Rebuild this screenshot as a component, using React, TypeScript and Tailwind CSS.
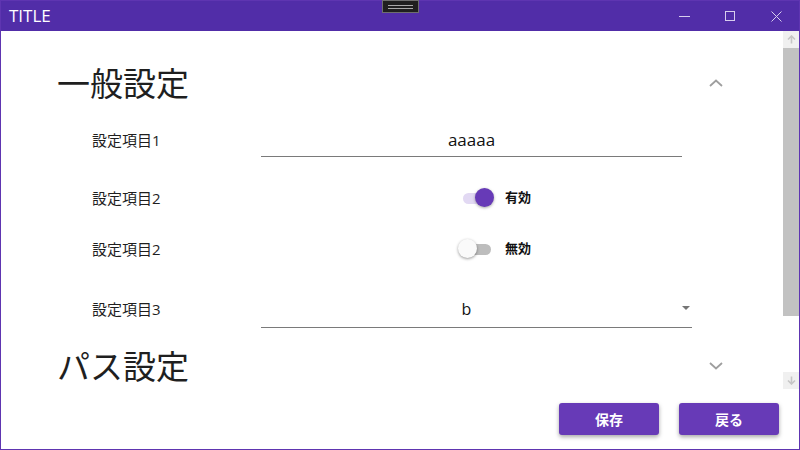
const font = "font-['Open_Sans','Noto_Sans_CJK_JP',sans-serif]"

function Chevron({ up }: { up?: boolean }) {
	return (
		<svg width="14" height="8" viewBox="0 0 14 8" className="text-[#9e9e9e]">
			<path
				d={up ? "M1 7 L7 1.5 L13 7" : "M1 1 L7 6.5 L13 1"}
				fill="none"
				stroke="currentColor"
				strokeWidth="1.8"
			/>
		</svg>
	)
}

function Toggle({ on, label }: { on: boolean; label: string }) {
	return (
		<div className="flex items-center gap-[11px] pl-[197px]">
			<div className="relative h-[20px] w-[36px]">
				<div
					className={
						on
							? "absolute left-[5px] top-[5px] h-[11px] w-[28px] rounded-full bg-[#e2d9f3]"
							: "absolute left-[5px] top-[5px] h-[11px] w-[28px] rounded-full bg-[#bdbdbd]"
					}
				/>
				<div
					className={
						on
							? "absolute left-[17px] top-0 h-[19px] w-[19px] rounded-full bg-[#673ab7] shadow-[0_1px_3px_rgba(0,0,0,0.35)]"
							: "absolute left-0 top-0 h-[19px] w-[19px] rounded-full bg-[#fafafa] shadow-[0_1px_3px_rgba(0,0,0,0.4)]"
					}
				/>
			</div>
			<span className="text-[13px] font-bold text-[#111]">{label}</span>
		</div>
	)
}

function ScrollArrow({ up }: { up?: boolean }) {
	return (
		<div className="flex h-[17px] items-center justify-center bg-[#f0f0f0]">
			<svg width="9" height="9" viewBox="0 0 9 9" className={up ? "text-[#c6c6c6]" : "text-[#c6c6c6] rotate-180"}>
				<path d="M4.5 1 V8.5 M1 4.5 L4.5 1 L8 4.5" fill="none" stroke="currentColor" strokeWidth="1.6" />
			</svg>
		</div>
	)
}

export default function App() {
	return (
		<div className={`${font} relative flex h-[450px] w-[800px] flex-col border border-[#5e35b1] bg-white`}>
			{/* title bar */}
			<div className="flex h-[30px] shrink-0 items-center bg-[#512da8]">
				<span className="pl-[8px] text-[17px] text-white">TITLE</span>
				<div className="ml-auto flex h-full">
					<div className="flex w-[46px] items-center justify-center">
						<div className="h-px w-[11px] bg-[#d7cdee]" />
					</div>
					<div className="flex w-[46px] items-center justify-center">
						<div className="h-[10px] w-[10px] border border-[#d7cdee]" />
					</div>
					<div className="flex w-[46px] items-center justify-center">
						<svg width="11" height="11" viewBox="0 0 11 11">
							<path d="M0.5 0.5 L10.5 10.5 M10.5 0.5 L0.5 10.5" stroke="#d7cdee" strokeWidth="1" />
						</svg>
					</div>
				</div>
			</div>
			<div className="absolute left-[381px] top-[-1px] flex h-[13px] w-[37px] flex-col items-center justify-center gap-[2px] border border-[#6e6e6e] bg-[#1f1f1f]">
				<div className="h-px w-[25px] bg-[#a8a8a8]" />
				<div className="h-px w-[25px] bg-[#a8a8a8]" />
			</div>

			{/* body */}
			<div className="flex h-[358px] shrink-0">
				<div className="flex-1 overflow-hidden pl-[56px] pr-[60px] text-[#1f1f1f]">
					<div className="mt-[30px] flex h-[44px] items-center justify-between">
						<h2 className="text-[33px] leading-none">一般設定</h2>
						<Chevron up />
					</div>

					<div className="mt-[15px] flex h-[40px] items-center pl-[35px]">
						<span className="w-[169px] text-[15px]">設定項目1</span>
						<div className="flex h-[34px] w-[421px] items-center justify-center border-b border-[#7a7a7a] text-[17px] text-[#111]">
							aaaaa
						</div>
					</div>

					<div className="mt-[18px] flex h-[40px] items-center pl-[35px]">
						<span className="w-[169px] text-[15px]">設定項目2</span>
						<Toggle on label="有効" />
					</div>

					<div className="mt-[11px] flex h-[40px] items-center pl-[35px]">
						<span className="w-[169px] text-[15px]">設定項目2</span>
						<Toggle on={false} label="無効" />
					</div>

					<div className="mt-[20px] flex h-[40px] items-center pl-[35px]">
						<span className="w-[169px] text-[15px]">設定項目3</span>
						<div className="relative flex h-[38px] w-[431px] items-center justify-center border-b border-[#7a7a7a] pr-[20px] text-[16px] text-[#111]">
							b
							<svg width="8" height="4" viewBox="0 0 8 4" className="absolute right-[2px] top-[16px]">
								<path d="M0 0 H8 L4 4 Z" fill="#757575" />
							</svg>
						</div>
					</div>

					<div className="mt-[15px] flex h-[44px] items-center justify-between">
						<h2 className="text-[33px] leading-none">パス設定</h2>
						<Chevron />
					</div>
				</div>

				{/* scrollbar */}
				<div className="flex w-[16px] flex-col">
					<ScrollArrow up />
					<div className="h-[268px] bg-[#c2c2c2]" />
					<div className="flex-1" />
					<ScrollArrow />
				</div>
			</div>

			{/* footer */}
			<div className="flex justify-end gap-[20px] pr-[20px] pt-[14px]">
				<button className="h-[32px] w-[100px] rounded-[3px] bg-[#673ab7] text-[14px] font-bold text-white shadow-[0_2px_4px_rgba(0,0,0,0.35)]">
					保存
				</button>
				<button className="h-[32px] w-[100px] rounded-[3px] bg-[#673ab7] text-[14px] font-bold text-white shadow-[0_2px_4px_rgba(0,0,0,0.35)]">
					戻る
				</button>
			</div>
		</div>
	)
}
